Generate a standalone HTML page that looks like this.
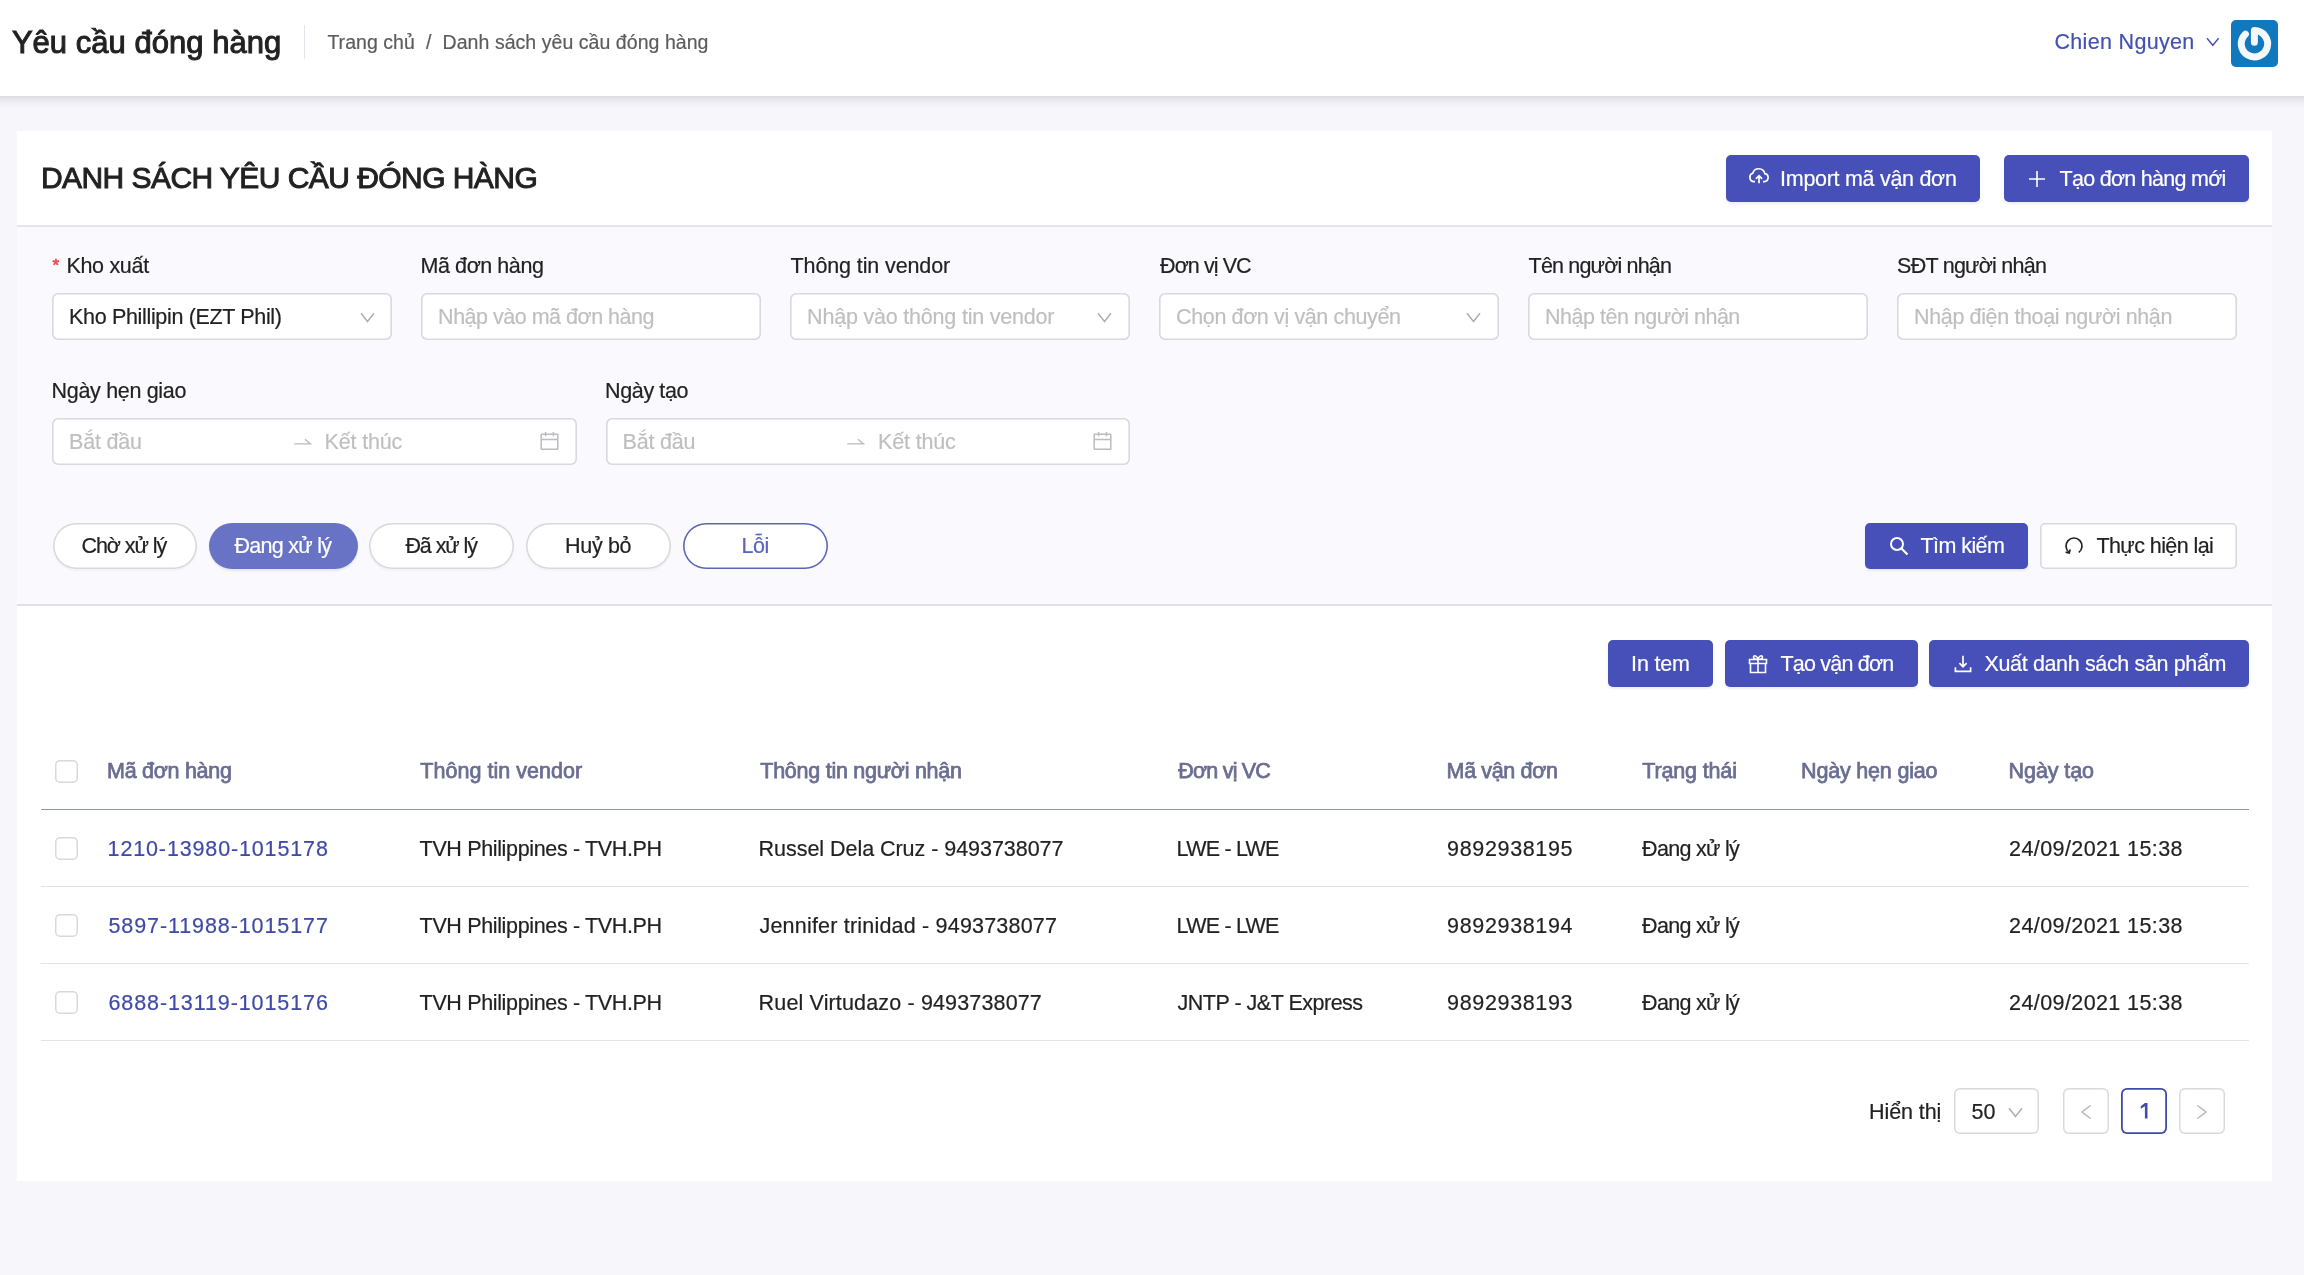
<!DOCTYPE html>
<html lang="vi">
<head>
<meta charset="utf-8">
<title>Yêu cầu đóng hàng</title>
<style>
*{box-sizing:border-box;margin:0;padding:0}
html,body{width:2304px;height:1275px;overflow:hidden}
body{background:#f6f6fb;font-family:"Liberation Sans",sans-serif;color:#222;font-size:21.5px;position:relative;-webkit-text-stroke:.2px}
#app{position:absolute;left:0;top:0;width:2304px;height:1275px;will-change:transform}
svg{display:block;flex:none}
.t{white-space:nowrap;display:inline-block}
.abs{position:absolute;white-space:nowrap;line-height:30px;height:30px}
/* top bar */
.topbar{position:absolute;left:-40px;top:-40px;width:2384px;height:136px;background:#fff;box-shadow:0 2px 11px rgba(20,20,32,.17)}
.topbar > *{margin-left:40px;margin-top:40px}
.topbar h1{position:absolute;left:10px;top:23px;font-size:31px;line-height:40px;font-weight:normal;color:#222;-webkit-text-stroke:1px #222;white-space:nowrap}
.vdiv{position:absolute;left:304px;top:25px;width:1px;height:34px;background:#e4e4ea}
.crumb{color:#5c5c5e;font-size:19.5px}
.user{color:#4351b3;font-size:21.5px}
.avatar{position:absolute;left:2231px;top:20px;width:47px;height:46.5px;border-radius:5px;background:#1079be}
/* card */
.card{position:absolute;left:17px;top:131px;width:2255px;height:1050px;background:#fff}
.card-head{position:absolute;left:17px;top:131px;width:2255px;height:96px;border-bottom:2px solid #e5e6eb}
h2{position:absolute;left:39px;top:157px;font-size:30px;line-height:42px;font-weight:normal;color:#222;white-space:nowrap;-webkit-text-stroke:.95px #222}
.btn{position:absolute;height:47px;border-radius:5px;background:#4650b8;color:#fff;line-height:46px;white-space:nowrap;box-shadow:0 2px 2px rgba(60,70,160,.09)}
.btn.ghost{background:#fff;color:#222;box-shadow:inset 0 0 0 1.6px #d9d9dc}
.btn > *{position:absolute}
.filter{position:absolute;left:17px;top:227px;width:2255px;height:379px;background:#f9f9fe;border-bottom:2px solid #dfe1e7}
.req{position:absolute;color:#f04a4f;font-size:17px;line-height:30px;-webkit-text-stroke:.7px #f04a4f}
.inp{position:absolute;background:#fff;box-shadow:inset 0 0 0 1.6px #d9d9dc;border-radius:6px}
.ph{color:#bfbfc1}
.pill{position:absolute;top:523px;height:46px;border-radius:23px;background:#fff;box-shadow:inset 0 0 0 1.6px #d9d9dc,0 2px 2px rgba(0,0,0,.03)}
.pill.on{background:#6873c6;color:#fff;box-shadow:0 2px 2px rgba(80,90,180,.12)}
.pill.sel{box-shadow:inset 0 0 0 1.6px #5a66bb}
.th{color:#6a6e92;-webkit-text-stroke:.75px #6a6e92}
.lnk{color:#3f4aa8}
.hline{position:absolute;left:41px;width:2208px;height:1px;background:#e2e3ea}
.hline.dark{background:#8e92ab}
.cb{position:absolute;left:55px;width:23px;height:23px;box-shadow:inset 0 0 0 1.5px #d9d9dc;border-radius:5px;background:#fff}
.pg{position:absolute;top:1088px;width:46px;height:46px;box-shadow:inset 0 0 0 1.45px #d9d9dc;border-radius:6px;background:#fff}
.pg.cur{box-shadow:inset 0 0 0 1.8px #3f4aa8}
</style>
</head>
<body>
<div id="app">
<div class="topbar">
<h1><span class="t" style="letter-spacing:0.03px;margin-left:1.9px;">Yêu cầu đóng hàng</span></h1>
<div class="vdiv"></div>
<div class="abs crumb" style="left:325.5px;top:27.0px"><span class="t" style="letter-spacing:0.04px;margin-left:1.9px;">Trang chủ</span></div>
<div class="abs crumb" style="left:425.5px;top:27.0px"><span class="t" style="letter-spacing:0.00px;margin-left:0.6px;">/</span></div>
<div class="abs crumb" style="left:442.0px;top:27.0px"><span class="t" style="letter-spacing:0.05px;margin-left:0.6px;">Danh sách yêu cầu đóng hàng</span></div>
<div class="abs user" style="left:2053.0px;top:27.0px"><span class="t" style="letter-spacing:0.32px;margin-left:1.5px;">Chien Nguyen</span></div>
<svg style="position:absolute;left:2206px;top:37px" width="14" height="10" viewBox="0 0 14 10"><path d="M1 1.2 L6.8 8.3 L12.6 1.2" fill="none" stroke="#4652b2" stroke-width="1.4"/></svg>
<div class="avatar"><svg width="47" height="47" viewBox="0 0 47 47"><path d="M23.4 22.3 V10.6 A13.2 13.2 0 1 1 14.4 14.2" fill="none" stroke="#f4f8fb" stroke-width="7" stroke-linecap="round" stroke-linejoin="round"/></svg></div>
</div>
<div class="card"></div>
<div class="card-head"></div>
<h2><span class="t" style="letter-spacing:-0.55px;margin-left:1.9px;">DANH SÁCH YÊU CẦU ĐÓNG HÀNG</span></h2>
<div class="btn" style="left:1726px;top:155px;width:254px;height:47px"><svg style="left:22.2px;top:12.3px" width="22" height="20" viewBox="0 0 22 20"><path d="M7 14.6 H5.6 A4.3 4.3 0 0 1 4.7 6.3 A6.3 6.3 0 0 1 16.9 6.7 A4 4 0 0 1 16.5 14.6 H15" fill="none" stroke="#fff" stroke-width="1.7"/><path d="M11 16.3 V9 M7.9 11.8 L11 8.7 L14.1 11.8" fill="none" stroke="#fff" stroke-width="1.7"/></svg><div style="left:53.5px;top:0.5px"><span class="t" style="letter-spacing:-0.29px;margin-left:0.6px;">Import mã vận đơn</span></div></div>
<div class="btn" style="left:2004px;top:155px;width:245px;height:47px"><svg style="left:24.0px;top:14.5px" width="18" height="18" viewBox="0 0 18 18"><path d="M9 1 V17 M1 9 H17" stroke="#fff" stroke-width="1.6"/></svg><div style="left:54.0px;top:0.5px"><span class="t" style="letter-spacing:-0.72px;margin-left:1.5px;">Tạo đơn hàng mới</span></div></div>
<div class="filter"></div>
<div class="req" style="left:52.6px;top:250.6px">*</div>
<div class="abs" style="left:65.8px;top:251.0px"><span class="t" style="letter-spacing:-0.30px;margin-left:0.6px;">Kho xuất</span></div>
<div class="abs" style="left:420.0px;top:251.0px"><span class="t" style="letter-spacing:-0.44px;margin-left:0.6px;">Mã đơn hàng</span></div>
<div class="abs" style="left:790.0px;top:251.0px"><span class="t" style="letter-spacing:-0.12px;margin-left:0.6px;">Thông tin vendor</span></div>
<div class="abs" style="left:1159.5px;top:251.0px"><span class="t" style="letter-spacing:-0.93px;margin-left:0.6px;">Đơn vị VC</span></div>
<div class="abs" style="left:1528.0px;top:251.0px"><span class="t" style="letter-spacing:-0.82px;margin-left:0.6px;">Tên người nhận</span></div>
<div class="abs" style="left:1896.5px;top:251.0px"><span class="t" style="letter-spacing:-0.75px;margin-left:0.6px;">SĐT người nhận</span></div>
<div class="inp" style="left:52px;top:293px;width:340px;height:47px"></div>
<div class="abs" style="left:68.5px;top:301.5px"><span class="t" style="letter-spacing:-0.34px;margin-left:0.6px;">Kho Phillipin (EZT Phil)</span></div>
<svg style="position:absolute;left:360.2px;top:312.3px" width="15" height="11" viewBox="0 0 15 11"><path d="M1 1.2 L7.5 9.5 L14 1.2" fill="none" stroke="#adadb3" stroke-width="1.5"/></svg>
<div class="inp" style="left:421px;top:293px;width:340px;height:47px"></div>
<div class="abs ph" style="left:437.5px;top:301.5px"><span class="t" style="letter-spacing:-0.49px;margin-left:0.6px;">Nhập vào mã đơn hàng</span></div>
<div class="inp" style="left:790px;top:293px;width:340px;height:47px"></div>
<div class="abs ph" style="left:806.5px;top:301.5px"><span class="t" style="letter-spacing:-0.20px;margin-left:0.6px;">Nhập vào thông tin vendor</span></div>
<svg style="position:absolute;left:1097.2px;top:312.3px" width="15" height="11" viewBox="0 0 15 11"><path d="M1 1.2 L7.5 9.5 L14 1.2" fill="none" stroke="#adadb3" stroke-width="1.5"/></svg>
<div class="inp" style="left:1159px;top:293px;width:340px;height:47px"></div>
<div class="abs ph" style="left:1175.5px;top:301.5px"><span class="t" style="letter-spacing:-0.38px;margin-left:0.6px;">Chọn đơn vị vận chuyển</span></div>
<svg style="position:absolute;left:1466.2px;top:312.3px" width="15" height="11" viewBox="0 0 15 11"><path d="M1 1.2 L7.5 9.5 L14 1.2" fill="none" stroke="#adadb3" stroke-width="1.5"/></svg>
<div class="inp" style="left:1528px;top:293px;width:340px;height:47px"></div>
<div class="abs ph" style="left:1544.5px;top:301.5px"><span class="t" style="letter-spacing:-0.50px;margin-left:0.6px;">Nhập tên người nhận</span></div>
<div class="inp" style="left:1897px;top:293px;width:340px;height:47px"></div>
<div class="abs ph" style="left:1913.5px;top:301.5px"><span class="t" style="letter-spacing:-0.37px;margin-left:0.6px;">Nhập điện thoại người nhận</span></div>
<div class="abs" style="left:51.0px;top:376.0px"><span class="t" style="letter-spacing:-0.32px;margin-left:0.6px;">Ngày hẹn giao</span></div>
<div class="abs" style="left:604.5px;top:376.0px"><span class="t" style="letter-spacing:-0.38px;margin-left:0.6px;">Ngày tạo</span></div>
<div class="inp" style="left:52px;top:418px;width:525px;height:47px"></div>
<div class="abs ph" style="left:68.5px;top:426.5px"><span class="t" style="letter-spacing:-0.22px;margin-left:0.6px;">Bắt đầu</span></div>
<svg style="position:absolute;left:292.5px;top:435px" width="19" height="12" viewBox="0 0 19 12"><path d="M1.2 8.9 H17.4 L12 4.2" fill="none" stroke="#bcbcc0" stroke-width="1.4"/></svg>
<div class="abs ph" style="left:324.0px;top:426.5px"><span class="t" style="letter-spacing:-0.16px;margin-left:0.6px;">Kết thúc</span></div>
<svg style="position:absolute;left:539.5px;top:431.3px" width="19" height="20" viewBox="0 0 19 20"><rect x="1.2" y="3.3" width="16.6" height="15" rx=".5" fill="none" stroke="#bcbcc0" stroke-width="1.5"/><path d="M1.2 8.4 H17.8 M5.6 1 V5.3 M13.4 1 V5.3" fill="none" stroke="#bcbcc0" stroke-width="1.5"/></svg>
<div class="inp" style="left:606px;top:418px;width:524px;height:47px"></div>
<div class="abs ph" style="left:622.0px;top:426.5px"><span class="t" style="letter-spacing:-0.22px;margin-left:0.6px;">Bắt đầu</span></div>
<svg style="position:absolute;left:846.0px;top:435px" width="19" height="12" viewBox="0 0 19 12"><path d="M1.2 8.9 H17.4 L12 4.2" fill="none" stroke="#bcbcc0" stroke-width="1.4"/></svg>
<div class="abs ph" style="left:877.5px;top:426.5px"><span class="t" style="letter-spacing:-0.16px;margin-left:0.6px;">Kết thúc</span></div>
<svg style="position:absolute;left:1093.0px;top:431.3px" width="19" height="20" viewBox="0 0 19 20"><rect x="1.2" y="3.3" width="16.6" height="15" rx=".5" fill="none" stroke="#bcbcc0" stroke-width="1.5"/><path d="M1.2 8.4 H17.8 M5.6 1 V5.3 M13.4 1 V5.3" fill="none" stroke="#bcbcc0" stroke-width="1.5"/></svg>
<div class="pill" style="left:52.5px;width:144.5px"></div>
<div class="abs" style=";left:80.0px;top:531.0px"><span class="t" style="letter-spacing:-1.06px;margin-left:1.5px;">Chờ xử lý</span></div>
<div class="pill on" style="left:209px;width:148.5px"></div>
<div class="abs" style="color:#fff;left:232.5px;top:531.0px"><span class="t" style="letter-spacing:-0.70px;margin-left:1.9px;">Đang xử lý</span></div>
<div class="pill" style="left:369px;width:145px"></div>
<div class="abs" style=";left:403.5px;top:531.0px"><span class="t" style="letter-spacing:-1.06px;margin-left:1.9px;">Đã xử lý</span></div>
<div class="pill" style="left:526px;width:144.5px"></div>
<div class="abs" style=";left:564.5px;top:531.0px"><span class="t" style="letter-spacing:-0.34px;margin-left:0.6px;">Huỷ bỏ</span></div>
<div class="pill sel" style="left:683px;width:144.5px"></div>
<div class="abs" style="color:#5a66bd;left:741.0px;top:531.0px"><span class="t" style="letter-spacing:-0.45px;margin-left:0.6px;">Lỗi</span></div>
<div class="btn" style="left:1865px;top:523px;width:163px;height:46px"><svg style="left:23.5px;top:12.7px" width="20" height="20" viewBox="0 0 20 20"><circle cx="8" cy="8" r="6" fill="none" stroke="#fff" stroke-width="2"/><path d="M12.5 12.5 L18.5 18.5" stroke="#fff" stroke-width="2.2"/></svg><div style="left:54.0px;top:-0.5px"><span class="t" style="letter-spacing:-0.57px;margin-left:1.5px;">Tìm kiếm</span></div></div>
<div class="btn ghost" style="left:2040px;top:523px;width:197px;height:46px"><svg style="left:23.5px;top:12.7px" width="20" height="20" viewBox="0 0 20 20"><path d="M14.8 16.4 A8 8 0 1 0 5.2 16.4" fill="none" stroke="#222" stroke-width="1.7"/><path d="M6.2 13.4 L5.2 17 L1.6 16.2" fill="none" stroke="#222" stroke-width="1.7"/></svg><div style="left:54.5px;top:-0.5px"><span class="t" style="letter-spacing:-0.57px;margin-left:1.9px;">Thực hiện lại</span></div></div>
<div class="btn" style="left:1608px;top:640px;width:105px;height:47px"><div style="left:22.5px;top:1.3px"><span class="t" style="letter-spacing:-0.19px;margin-left:0.6px;">In tem</span></div></div>
<div class="btn" style="left:1725px;top:640px;width:193px;height:47px"><svg style="left:22.5px;top:13.5px" width="20" height="20" viewBox="0 0 20 20"><path d="M2.5 9.5 V18.5 H17.5 V9.5 M1.5 5.5 H18.5 V9.5 H1.5 Z M10 5.5 V18.5 M10 5.5 C7 5.5 5 4.5 5.6 2.6 C6.4 .8 9.4 2.2 10 5.5 C10.6 2.2 13.6 .8 14.4 2.6 C15 4.5 13 5.5 10 5.5" fill="none" stroke="#fff" stroke-width="1.6"/></svg><div style="left:54.0px;top:1.3px"><span class="t" style="letter-spacing:-0.79px;margin-left:1.5px;">Tạo vận đơn</span></div></div>
<div class="btn" style="left:1929px;top:640px;width:320px;height:47px"><svg style="left:24.0px;top:13.5px" width="20" height="20" viewBox="0 0 20 20"><path d="M10 1.8 V12.6 M6.4 9.2 L10 12.8 L13.6 9.2 M2.4 13.2 V17.3 H17.6 V13.2" fill="none" stroke="#fff" stroke-width="1.7"/></svg><div style="left:54.0px;top:1.3px"><span class="t" style="letter-spacing:-0.36px;margin-left:1.5px;">Xuất danh sách sản phẩm</span></div></div>
<div class="cb" style="top:760px"></div>
<div class="abs th" style="left:106.5px;top:756.0px"><span class="t" style="letter-spacing:-0.29px;margin-left:0.6px;">Mã đơn hàng</span></div>
<div class="abs th" style="left:418.0px;top:756.0px"><span class="t" style="letter-spacing:0.03px;margin-left:2.3px;">Thông tin vendor</span></div>
<div class="abs th" style="left:758.0px;top:756.0px"><span class="t" style="letter-spacing:-0.26px;margin-left:2.3px;">Thông tin người nhận</span></div>
<div class="abs th" style="left:1176.0px;top:756.0px"><span class="t" style="letter-spacing:-0.79px;margin-left:2.3px;">Đơn vị VC</span></div>
<div class="abs th" style="left:1446.0px;top:756.0px"><span class="t" style="letter-spacing:-0.36px;margin-left:0.6px;">Mã vận đơn</span></div>
<div class="abs th" style="left:1640.0px;top:756.0px"><span class="t" style="letter-spacing:-0.15px;margin-left:2.3px;">Trạng thái</span></div>
<div class="abs th" style="left:1800.5px;top:756.0px"><span class="t" style="letter-spacing:-0.19px;margin-left:0.6px;">Ngày hẹn giao</span></div>
<div class="abs th" style="left:2008.0px;top:756.0px"><span class="t" style="letter-spacing:-0.09px;margin-left:0.6px;">Ngày tạo</span></div>
<div class="hline dark" style="top:809px"></div>
<div class="cb" style="top:837px"></div>
<div class="abs lnk" style="left:107.0px;top:834.0px"><span class="t" style="letter-spacing:0.86px;margin-left:0.6px;">1210-13980-1015178</span></div>
<div class="abs" style="left:419.0px;top:834.0px"><span class="t" style="letter-spacing:-0.35px;margin-left:0.6px;">TVH Philippines - TVH.PH</span></div>
<div class="abs" style="left:758.0px;top:834.0px"><span class="t" style="letter-spacing:-0.04px;margin-left:0.6px;">Russel Dela Cruz - 9493738077</span></div>
<div class="abs" style="left:1176.0px;top:834.0px"><span class="t" style="letter-spacing:-0.79px;margin-left:0.6px;">LWE - LWE</span></div>
<div class="abs" style="left:1446.5px;top:834.0px"><span class="t" style="letter-spacing:0.65px;margin-left:0.6px;">9892938195</span></div>
<div class="abs" style="left:1641.5px;top:834.0px"><span class="t" style="letter-spacing:-0.70px;margin-left:0.6px;">Đang xử lý</span></div>
<div class="abs" style="left:2008.5px;top:834.0px"><span class="t" style="letter-spacing:0.40px;margin-left:0.6px;">24/09/2021 15:38</span></div>
<div class="hline" style="top:886px"></div>
<div class="cb" style="top:914px"></div>
<div class="abs lnk" style="left:107.0px;top:911.0px"><span class="t" style="letter-spacing:0.90px;margin-left:1.5px;">5897-11988-1015177</span></div>
<div class="abs" style="left:419.0px;top:911.0px"><span class="t" style="letter-spacing:-0.35px;margin-left:0.6px;">TVH Philippines - TVH.PH</span></div>
<div class="abs" style="left:758.0px;top:911.0px"><span class="t" style="letter-spacing:0.20px;margin-left:1.5px;">Jennifer trinidad - 9493738077</span></div>
<div class="abs" style="left:1176.0px;top:911.0px"><span class="t" style="letter-spacing:-0.79px;margin-left:0.6px;">LWE - LWE</span></div>
<div class="abs" style="left:1446.5px;top:911.0px"><span class="t" style="letter-spacing:0.65px;margin-left:0.6px;">9892938194</span></div>
<div class="abs" style="left:1641.5px;top:911.0px"><span class="t" style="letter-spacing:-0.70px;margin-left:0.6px;">Đang xử lý</span></div>
<div class="abs" style="left:2008.5px;top:911.0px"><span class="t" style="letter-spacing:0.40px;margin-left:0.6px;">24/09/2021 15:38</span></div>
<div class="hline" style="top:963px"></div>
<div class="cb" style="top:991px"></div>
<div class="abs lnk" style="left:107.0px;top:988.0px"><span class="t" style="letter-spacing:0.90px;margin-left:1.5px;">6888-13119-1015176</span></div>
<div class="abs" style="left:419.0px;top:988.0px"><span class="t" style="letter-spacing:-0.35px;margin-left:0.6px;">TVH Philippines - TVH.PH</span></div>
<div class="abs" style="left:758.0px;top:988.0px"><span class="t" style="letter-spacing:0.15px;margin-left:0.6px;">Ruel Virtudazo - 9493738077</span></div>
<div class="abs" style="left:1176.0px;top:988.0px"><span class="t" style="letter-spacing:-0.49px;margin-left:1.5px;">JNTP - J&amp;T Express</span></div>
<div class="abs" style="left:1446.5px;top:988.0px"><span class="t" style="letter-spacing:0.65px;margin-left:0.6px;">9892938193</span></div>
<div class="abs" style="left:1641.5px;top:988.0px"><span class="t" style="letter-spacing:-0.70px;margin-left:0.6px;">Đang xử lý</span></div>
<div class="abs" style="left:2008.5px;top:988.0px"><span class="t" style="letter-spacing:0.40px;margin-left:0.6px;">24/09/2021 15:38</span></div>
<div class="hline" style="top:1040px"></div>
<div class="abs" style="left:1868.5px;top:1097.0px"><span class="t" style="letter-spacing:-0.09px;margin-left:0.6px;">Hiển thị</span></div>
<div class="pg" style="left:1954px;width:85px"></div>
<div class="abs" style="left:1970.8px;top:1097.0px"><span class="t" style="letter-spacing:0.18px;margin-left:0.6px;">50</span></div>
<svg style="position:absolute;left:2007.5px;top:1107px" width="15" height="11" viewBox="0 0 15 11"><path d="M1 1.2 L7.5 9.5 L14 1.2" fill="none" stroke="#adadb3" stroke-width="1.5"/></svg>
<div class="pg" style="left:2063px"></div>
<svg style="position:absolute;left:2080px;top:1104px" width="12" height="16" viewBox="0 0 12 16"><path d="M10.5 1.5 L2 8 L10.5 14.5" fill="none" stroke="#b5b5bc" stroke-width="1.5"/></svg>
<div class="pg cur" style="left:2121px"></div>
<svg style="position:absolute;left:2140px;top:1103.4px" width="9" height="16" viewBox="0 0 9 16"><path d="M4.9 0 H7.5 V15.4 H4.9 V3.3 L0.8 5.8 V3.3 Z" fill="#414cab"/></svg>
<div class="pg" style="left:2179px"></div>
<svg style="position:absolute;left:2196px;top:1104px" width="12" height="16" viewBox="0 0 12 16"><path d="M1.5 1.5 L10 8 L1.5 14.5" fill="none" stroke="#b5b5bc" stroke-width="1.5"/></svg>
</div>
</body>
</html>
